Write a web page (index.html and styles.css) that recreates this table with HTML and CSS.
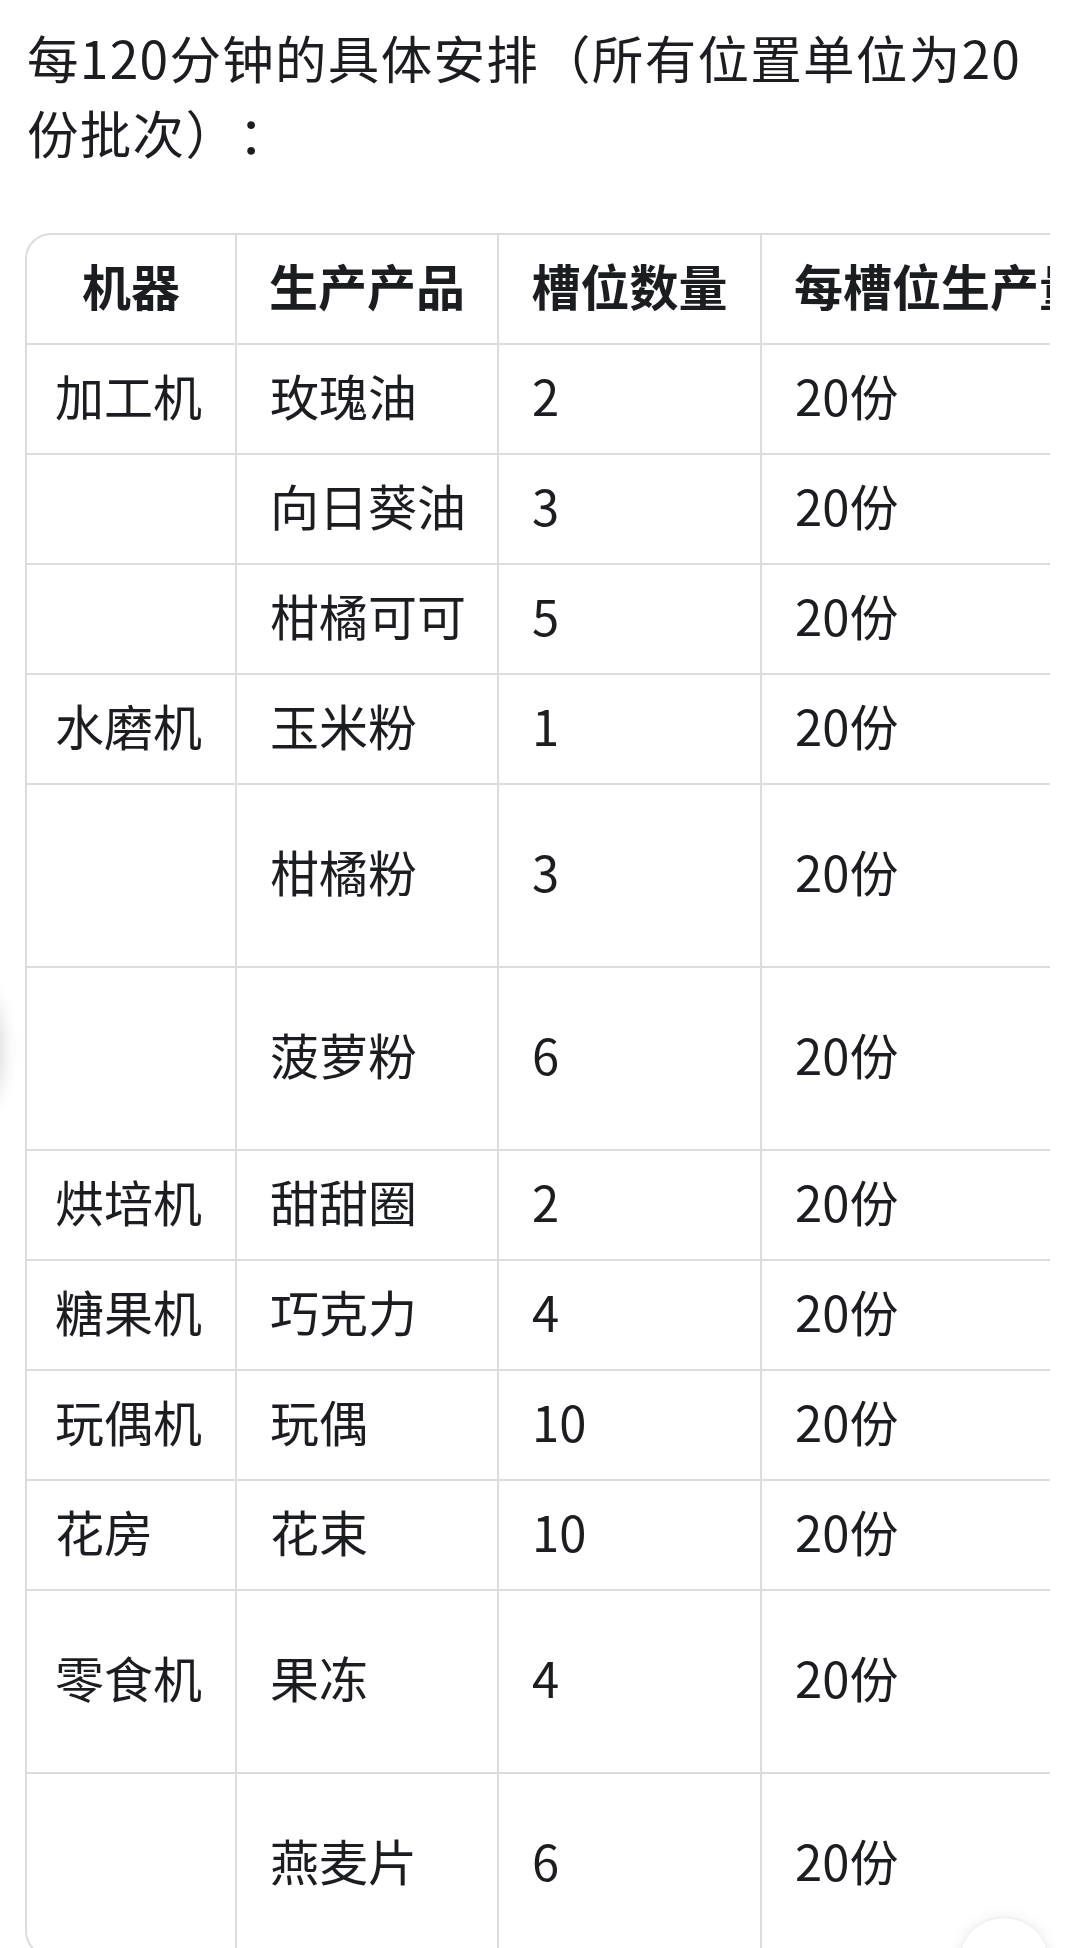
FILE: index.html
```html
<!DOCTYPE html>
<html lang="zh-CN">
<head>
<meta charset="utf-8">
<title>每120分钟的具体安排</title>
<link rel="stylesheet" href="styles.css">
</head>
<body>
<main class="page">
  <p class="intro">每120分钟的具体安排（所有位置单位为20份批次）：</p>
  <div class="table-scroll">
    <table class="plan">
      <thead>
        <tr>
          <th class="c-machine">机器</th>
          <th class="c-product">生产产品</th>
          <th class="c-slots">槽位数量</th>
          <th class="c-per">每槽位生产量</th>
          <th class="c-total">120分钟总产量</th>
        </tr>
      </thead>
      <tbody>
        <tr><td>加工机</td><td>玫瑰油</td><td>2</td><td>20份</td><td>40份</td></tr>
        <tr><td></td><td>向日葵油</td><td>3</td><td>20份</td><td>60份</td></tr>
        <tr><td></td><td>柑橘可可</td><td>5</td><td>20份</td><td>100份</td></tr>
        <tr><td>水磨机</td><td>玉米粉</td><td>1</td><td>20份</td><td>20份</td></tr>
        <tr class="tall"><td></td><td>柑橘粉</td><td>3</td><td>20份</td><td>60份</td></tr>
        <tr class="tall"><td></td><td>菠萝粉</td><td>6</td><td>20份</td><td>120份</td></tr>
        <tr><td>烘培机</td><td>甜甜圈</td><td>2</td><td>20份</td><td>40份</td></tr>
        <tr><td>糖果机</td><td>巧克力</td><td>4</td><td>20份</td><td>80份</td></tr>
        <tr><td>玩偶机</td><td>玩偶</td><td>10</td><td>20份</td><td>200份</td></tr>
        <tr><td>花房</td><td>花束</td><td>10</td><td>20份</td><td>200份</td></tr>
        <tr class="tall"><td>零食机</td><td>果冻</td><td>4</td><td>20份</td><td>80份</td></tr>
        <tr class="tall last"><td></td><td>燕麦片</td><td>6</td><td>20份</td><td>120份</td></tr>
      </tbody>
    </table>
  </div>
</main>
<div class="side-handle"></div>
<div class="float-button"></div>
</body>
</html>
```

FILE: styles.css
```css
html, body {
  margin: 0;
  padding: 0;
  background: #ffffff;
}

body {
  position: relative;
  font-family: "Noto Sans CJK SC", "Noto Sans", sans-serif;
  color: #1c1d20;
  overflow: hidden;
  height: 1948px;
}

.page {
  padding: 19px 24px 0 25px;
}

.intro {
  margin: 0 0 64px 2px;
  font-size: 51.5px;
  line-height: 75px;
  font-weight: 400;
  letter-spacing: 1.3px;
  text-spacing-trim: space-all;
}

.table-scroll {
  overflow-x: auto;
  scrollbar-width: none;
}

.table-scroll::-webkit-scrollbar {
  display: none;
}

.plan {
  width: max-content;
  border-collapse: separate;
  border-spacing: 0;
  border: 2px solid #dcdcdc;
  border-radius: 26px;
  font-size: 49px;
  line-height: 73px;
  white-space: nowrap;
}

.plan th,
.plan td {
  box-sizing: border-box;
  padding: 12.5px 30px 22.5px 33px;
  border-right: 2px solid #dcdcdc;
  border-bottom: 2px solid #dcdcdc;
  text-align: left;
  vertical-align: middle;
  font-weight: 400;
}

.plan td:first-child {
  padding-left: 28px;
}

.plan th {
  font-weight: 700;
  text-align: center;
  padding-left: 30px;
  padding-right: 30px;
}

.plan th:last-child,
.plan td:last-child {
  border-right: none;
}

.plan tr.last td {
  border-bottom: none;
}

.plan .c-machine { width: 210px; }
.plan .c-product { width: 262px; }
.plan .c-slots { width: 263px; }
.plan .c-per { width: 360px; }
.plan .c-total { width: 420px; }

.plan tr.tall td {
  padding-top: 49px;
  padding-bottom: 59px;
}

.side-handle {
  position: absolute;
  left: -70px;
  top: 980px;
  width: 70px;
  height: 138px;
  border-radius: 50%;
  background: #ffffff;
  box-shadow: 0 0 20px rgba(0, 0, 0, 0.2);
}

.float-button {
  position: absolute;
  left: 958px;
  top: 1917px;
  width: 90px;
  height: 90px;
  border-radius: 50%;
  background: #ffffff;
  border: 1px solid #ededed;
  box-shadow: 0 0 14px rgba(0, 0, 0, 0.08);
}
```
